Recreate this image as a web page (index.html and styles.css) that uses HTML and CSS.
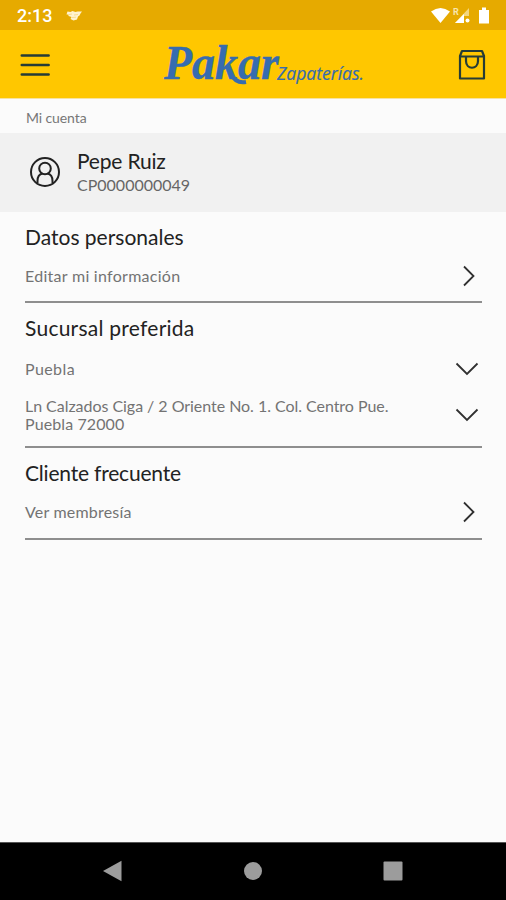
FILE: index.html
```
<!DOCTYPE html>
<html lang="es">
    <head>
        <meta charset="utf-8">
        <title>Mi cuenta</title>
        <link rel="stylesheet" href="styles.css">
    </head>
    <body>
        <div class="status-bar">
            <span class="time">2:13</span>
            <svg class="notif" width="17" height="12" viewBox="0 0 17 12">
                <path d="M1.500 1.500l3 .5 2-1 3 1 2-.5 4.500 0-1.500 2-1 2-1.500 1-1 3-3.500 1-3-1.500 1-2-3-1 0-1.500-2 0z" fill="#fff3cf"/>
                <path d="M3 4.500l3-.5M8 5l4-.5M6 7.500l4-.3" stroke="#f0cd6a" stroke-width=".6"/>
            </svg>
            <svg class="signals" width="60" height="18" viewBox="0 0 60 18">
                <path d="M0 4.500Q9.500-2.500 19 4.500L9.500 16z" fill="#fff"/>
                <text x="22" y="8" class="roaming">R</text>
                <path d="M38 1v8l-5 0v7h-9z" fill="#f3d67d"/>
                <path d="M24 16l9-9v9z" fill="#fff"/>
                <circle cx="36.500" cy="13.500" r="2" fill="#fff"/>
                <path d="M48 3h3V.500h4V3h3v13.500H48z" fill="#fff"/>
            </svg>
        </div>
        <header class="header">
            <svg class="menu" width="30" height="24" viewBox="0 0 30 24">
                <path d="M1.800 2.500h26.800M1.800 12h26.800M1.800 21.500h26.800" stroke="#263c36" stroke-width="2.600" stroke-linecap="round"/>
            </svg>
            <svg class="logo" width="204" height="48" viewBox="0 0 204 48">
                <text class="logo-name" x="2" y="38" textLength="115" lengthAdjust="spacingAndGlyphs">Pakar</text>
                <path d="M69 33q5 10 15 8" fill="none" stroke="#366caf" stroke-width="4"/>
                <text class="logo-sub" x="115" y="39" textLength="87" lengthAdjust="spacingAndGlyphs">Zapaterías.</text>
            </svg>
            <svg class="bag" width="28" height="32" viewBox="0 0 28 32">
                <path d="M2 7L4 2h20L26 7v22.500H2zM2 7.500h24M8 7.500v4.500c0 9 12 9 12 0V7.500" fill="none" stroke="#263c36" stroke-width="2.200" stroke-linejoin="round"/>
            </svg>
        </header>
        <div class="breadcrumb"><span>Mi cuenta</span></div>
        <div class="profile">
            <svg width="32" height="32" viewBox="0 0 32 32" fill="none" stroke="#222" stroke-width="2">
                <circle cx="16" cy="16" r="14"/>
                <circle cx="16" cy="12.500" r="5.800"/>
                <path d="M8.500 27v-2q0-6.500 5-7.500M23.500 27v-2q0-6.500-5-7.500"/>
            </svg>
            <div class="profile-text">
                <div class="profile-name">Pepe Ruiz</div>
                <div class="profile-id">CP0000000049</div>
            </div>
        </div>
        <main class="content">
            <section class="section datos">
                <h2 class="title">Datos personales</h2>
                <div class="row">
                    <span class="label-edit">Editar mi información</span>
                    <svg class="next" width="14" height="22" viewBox="0 0 14 22"><path d="M2 1.500l9.500 9.500L2 20.500"/></svg>
                </div>
            </section>
            <section class="section sucursal">
                <h2 class="title">Sucursal preferida</h2>
                <div class="row city">
                    <span class="label-city">Puebla</span>
                    <svg class="down" width="24" height="14" viewBox="0 0 24 14"><path d="M1.500 1.500L12 12 22.500 1.500"/></svg>
                </div>
                <div class="row address">
                    <div class="label-address">
                        <div>Ln Calzados Ciga / 2 Oriente No. 1. Col. Centro Pue.</div>
                        <div class="zip">Puebla 72000</div>
                    </div>
                    <svg class="down" width="24" height="14" viewBox="0 0 24 14"><path d="M1.500 1.500L12 12 22.500 1.500"/></svg>
                </div>
            </section>
            <section class="section cliente">
                <h2 class="title">Cliente frecuente</h2>
                <div class="row">
                    <span class="label-member">Ver membresía</span>
                    <svg class="next" width="14" height="22" viewBox="0 0 14 22"><path d="M2 1.500l9.500 9.500L2 20.500"/></svg>
                </div>
            </section>
        </main>
        <nav class="nav-bar">
            <svg width="20" height="22" viewBox="0 0 20 22"><path d="M0 11L18.500 .7v20.600z"/></svg>
            <svg width="20" height="20" viewBox="0 0 20 20"><circle cx="10" cy="10" r="9"/></svg>
            <svg width="20" height="20" viewBox="0 0 20 20"><rect x=".5" y=".5" width="19" height="19" rx="1"/></svg>
        </nav>
    </body>
</html>
```
FILE: styles.css
```
*{
    box-sizing: border-box;
}
body{
    margin: 0;
    height: 900px;
    display: flex;
    flex-direction: column;
    overflow: hidden;
    background-color: #fbfbfb;
    font-family: Lato, "Open Sans", sans-serif;
    color: #222;
}
.status-bar{
    height: 30px;
    display: flex;
    align-items: center;
    padding: 1px 15px 0 17px;
    background-color: #e6aa00;
}
.time{
    font-family: Roboto, sans-serif;
    font-size: 18px;
    font-weight: 500;
    color: white;
}
.notif{
    margin-left: 14px;
}
.signals{
    margin-left: auto;
}
.roaming{
    font: bold 9px Roboto, sans-serif;
    fill: #f8e5ad;
}
.header{
    height: 69px;
    display: flex;
    align-items: center;
    padding: 1px 20px 0;
    background-color: #ffc700;
    border-bottom: 1px solid #f7e3a0;
}
.logo{
    margin-left: 112px;
    overflow: visible;
}
.logo-name{
    font: italic bold 48px "Liberation Serif", serif;
    fill: #366caf;
    stroke: #366caf;
    stroke-width: .4px;
}
.logo-sub{
    font: italic 18px "Open Sans", sans-serif;
    fill: #366caf;
    stroke: #366caf;
    stroke-width: .2px;
}
.bag{
    margin-left: auto;
}
.breadcrumb{
    height: 34px;
    padding: 10px 26px;
    font-size: 14px;
    line-height: 17px;
    letter-spacing: -.1px;
    color: #777;
}
.profile{
    height: 79px;
    display: flex;
    align-items: center;
    gap: 16px;
    padding: 0 29px 2px;
    background-color: #f1f1f1;
}
.profile-name{
    font-size: 21px;
    line-height: 25px;
    letter-spacing: -.2px;
}
.profile-id{
    font-size: 16px;
    line-height: 23px;
    color: #666;
}
.content{
    flex: 1;
    padding: 0 24px 0 25px;
}
.section{
    padding-top: 12px;
    border-bottom: 2px solid #8e8e8e;
}
.title{
    margin: 0;
    font-size: 21px;
    font-weight: 400;
    line-height: 26px;
}
.sucursal .title{
    letter-spacing: .25px;
}
.cliente .title{
    letter-spacing: -.2px;
}
.row{
    height: 52px;
    display: flex;
    align-items: center;
    justify-content: space-between;
    font-size: 16px;
    line-height: 18px;
    color: #737373;
}
.datos .row{
    height: 51px;
}
.row.city{
    height: 54px;
    padding: 2px 0 0;
}
.row.address{
    height: 51px;
    padding: 0 0 11px;
}
.label-edit{
    letter-spacing: .28px;
}
.label-city{
    letter-spacing: .4px;
}
.label-address{
    letter-spacing: -.04px;
}
.zip{
    letter-spacing: .1px;
}
.label-member{
    letter-spacing: .2px;
}
.row svg{
    fill: none;
    stroke: #303030;
    stroke-width: 1.8;
}
.next{
    margin-right: 6px;
}
.down{
    margin-right: 3px;
}
.nav-bar{
    height: 58px;
    display: flex;
    align-items: center;
    justify-content: space-between;
    padding: 0 103px 2px;
    background-color: black;
    border-top: 1px solid #555;
}
.nav-bar svg{
    fill: #9c9c9c;
}
```
